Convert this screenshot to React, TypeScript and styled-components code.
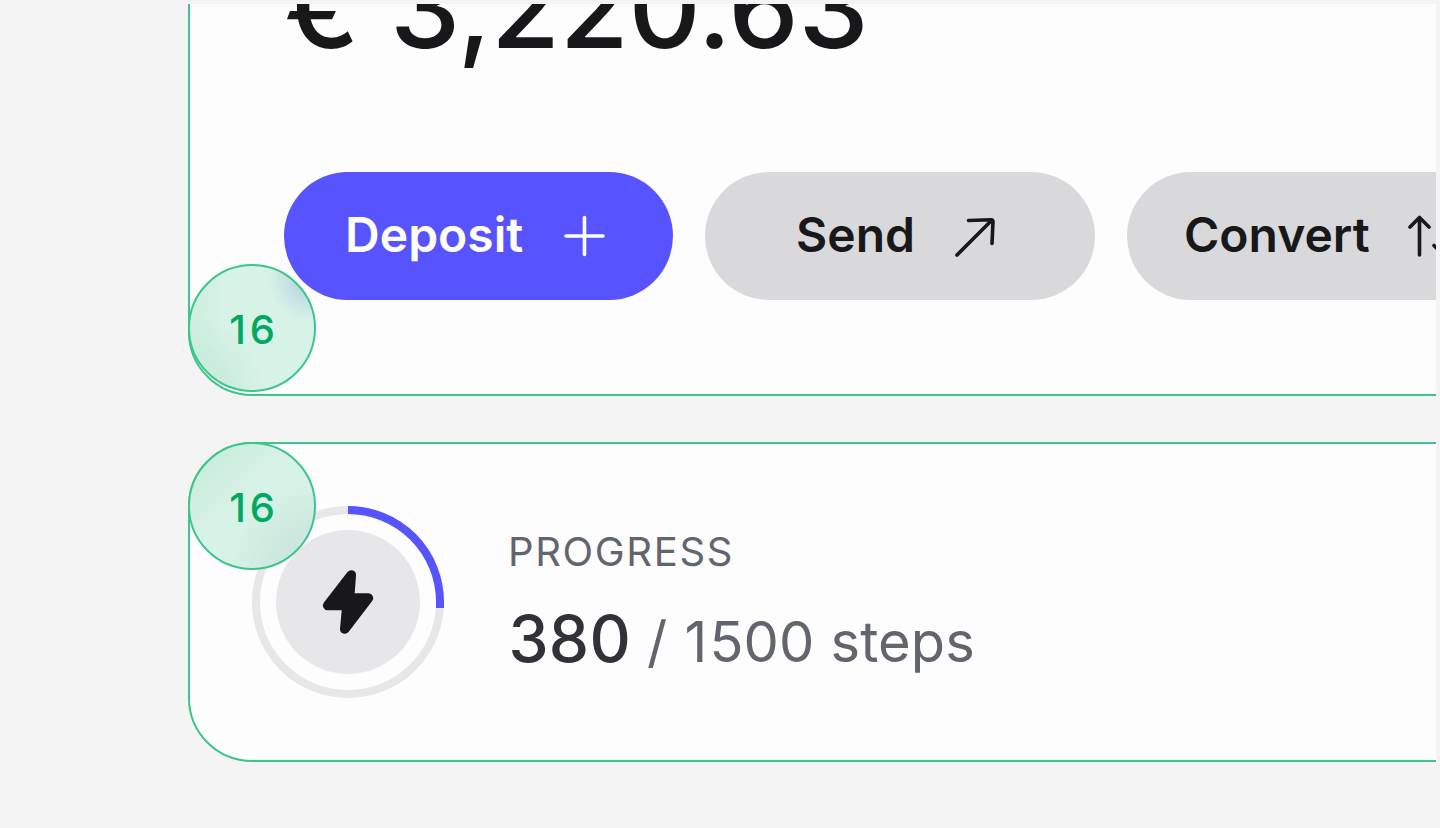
import React from 'react';
import styled, { createGlobalStyle } from 'styled-components';

const GlobalStyle = createGlobalStyle`
  *, *::before, *::after { box-sizing: border-box; }
  body { margin: 0; background: #f4f4f4; font-family: Inter, sans-serif; }
`;

const Page = styled.main`
  width: 1440px;
  height: 828px;
  padding: 4px 4px 0 0;
  overflow: hidden;
  background: #f4f4f4;
`;

const Viewport = styled.div`
  width: 1436px;
  height: 824px;
  padding-left: 188px;
  overflow: hidden;
  display: flex;
  flex-direction: column;
  justify-content: flex-end;
  gap: 46px;
  padding-bottom: 66px;
`;

const Card = styled.section`
  position: relative;
  flex: none;
  width: 1456px;
  background: #fdfdfd;
  border: 2px solid #3cc68a;
  border-radius: 64px;
`;

const BalanceCard = styled(Card)`
  padding: 94px;
`;

const Amount = styled.div`
  font-size: 112px;
  line-height: 136px;
  font-weight: 500;
  letter-spacing: -0.3px;
  word-spacing: 1.4px;
  color: #18181a;
  margin-bottom: 97px;
  white-space: pre;
`;

const Actions = styled.div`
  display: flex;
  gap: 32px;
`;

const Action = styled.button<{ $primary?: boolean }>`
  flex: none;
  width: 389.33px;
  height: 128px;
  padding: 0 0 0 3.4px;
  border: 0;
  border-radius: 64px;
  display: flex;
  align-items: center;
  justify-content: center;
  gap: 28.4px;
  font: 600 48px/64px Inter, sans-serif;
  color: ${(p) => (p.$primary ? '#fdfdfd' : '#18181a')};
  background: ${(p) => (p.$primary ? '#5753ff' : '#d9d9db')};
`;

const ActionLabel = styled.span`
  padding-bottom: 2px;
`;

const Icon = styled.svg`
  flex: none;
  width: 64px;
  height: 64px;
  fill: none;
  stroke: currentColor;
  stroke-width: 3.6;
  stroke-linecap: round;
  stroke-linejoin: round;
`;

const ProgressCard = styled(Card)`
  height: 320px;
  padding: 62px;
  display: flex;
  align-items: flex-start;
  gap: 64px;
`;

const Ring = styled.svg`
  flex: none;
  width: 192px;
  height: 192px;
`;

const Details = styled.div`
  padding-top: 20px;
`;

const Label = styled.div`
  font-size: 40px;
  line-height: 52px;
  letter-spacing: 1.65px;
  color: #62646e;
`;

const Steps = styled.div`
  margin-top: 21px;
  padding-left: 0.4px;
  font-size: 56px;
  line-height: 80px;
  letter-spacing: 0.3px;
  color: #62646e;
  white-space: pre;
`;

const Done = styled.span`
  font-size: 64px;
  font-weight: 500;
  color: #313238;
`;

const Goal = styled.span`
  letter-spacing: 0.15px;
`;

const LeadDigit = styled.span`
  margin-left: 1px;
  letter-spacing: 2px;
`;

const Radius = styled.div<{ $corner: 'top' | 'bottom' }>`
  position: absolute;
  left: -2px;
  ${(p) => (p.$corner === 'top' ? 'top: -2px;' : 'bottom: 2px;')}
  width: 128px;
  height: 128px;
  border: 2px solid #3cc68a;
  border-radius: 50%;
  background: ${(p) =>
    p.$corner === 'top'
      ? `radial-gradient(circle at 100% 100%, #cce8de 20%, rgba(215, 242, 230, 0) 50%),
         linear-gradient(135deg, #c9ecdc 12%, rgba(215, 242, 230, 0) 42%)`
      : `radial-gradient(circle at 96% 12%, #b9cee4 4%, rgba(190, 218, 226, 0.7) 12%, rgba(215, 242, 230, 0) 25%),
         radial-gradient(circle at 0% 100%, #c9ecdc 18%, rgba(215, 242, 230, 0) 42%),
         linear-gradient(90deg, #ceeedf 0%, rgba(215, 242, 230, 0) 30%)`};
  background-color: #d7f2e6;
  display: flex;
  align-items: center;
  justify-content: center;
  padding-top: 3px;
  padding-left: 4px;
  font-size: 40px;
  line-height: 48px;
  font-weight: 500;
  letter-spacing: 3.8px;
  color: #00a860;
`;

export default function App() {
  return (
    <Page>
      <GlobalStyle />
      <Viewport>
        <BalanceCard>
          <Amount>€ 3,220.63</Amount>
          <Actions>
            <Action $primary>
              <ActionLabel>Deposit</ActionLabel>
              <Icon viewBox="0 0 64 64">
                <path d="M32.500 13.500v37M14 32h37" />
              </Icon>
            </Action>
            <Action>
              <ActionLabel>Send</ActionLabel>
              <Icon viewBox="0 0 64 64">
                <path d="M14 51 49 16M25.500 16.500 48 15.700Q50 15.700 50 17.700L49 39.500" />
              </Icon>
            </Action>
            <Action>
              <ActionLabel>Convert</ActionLabel>
              <Icon viewBox="0 0 64 64">
                <path d="M21.500 51V14M12 23 21.500 13.500 31 23M45.500 13.500V51M36 41.500 45.500 51 55 41.500" />
              </Icon>
            </Action>
          </Actions>
          <Radius $corner="bottom">16</Radius>
        </BalanceCard>
        <ProgressCard>
          <Ring viewBox="0 0 192 192">
            <circle cx="96" cy="96" r="92" fill="none" stroke="#e7e7e9" strokeWidth="8" />
            <path d="M96 4A92 92 0 0 1 188 96V102" fill="none" stroke="#5753ff" strokeWidth="8" />
            <circle cx="96" cy="96" r="72" fill="#e7e7e9" />
            <path
              d="M104 69.500 102.700 87.300H116.300A4.800 4.800 0 0 1 120 95.300L96.500 126A4.800 4.800 0 0 1 88 122.700L89.700 104.300H75.700A4.800 4.800 0 0 1 71.900 96.500L95.500 66A4.800 4.800 0 0 1 104 69.500Z"
              fill="#18181a"
            />
          </Ring>
          <Details>
            <Label>PROGRESS</Label>
            <Steps>
              <Done>380</Done> / <Goal><LeadDigit>1</LeadDigit>500 steps</Goal>
            </Steps>
          </Details>
          <Radius $corner="top">16</Radius>
        </ProgressCard>
      </Viewport>
    </Page>
  );
}
